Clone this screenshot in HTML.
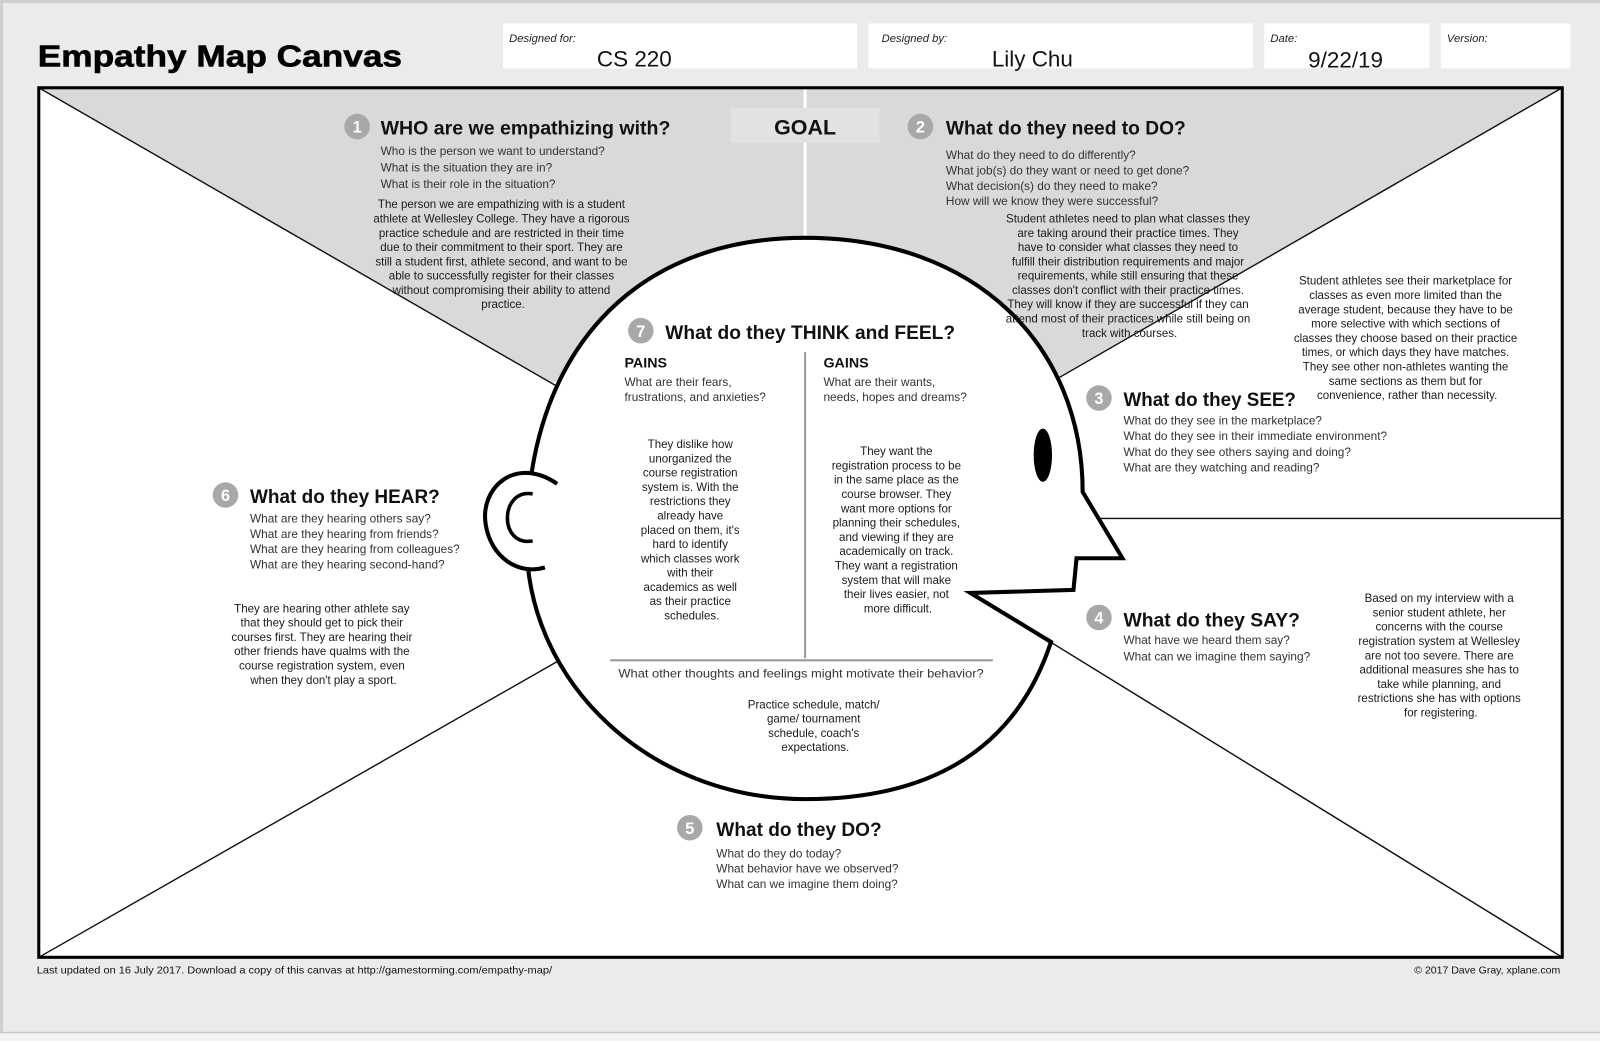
<!DOCTYPE html>
<html><head><meta charset="utf-8"><style>
html,body{margin:0;padding:0;background:#ebebeb;}
svg{display:block;}
text{font-family:"Liberation Sans",sans-serif;}
.q{font-size:11.6px;fill:#333;}
.p{font-size:11.3px;fill:#1a1a1a;text-anchor:middle;}
.h{font-size:19px;font-weight:bold;fill:#111;}
.n{font-size:16px;font-weight:bold;fill:#fff;text-anchor:middle;}
.lbl{font-size:11px;font-style:italic;fill:#222;}
.val{font-size:22px;fill:#111;}
</style></head><body>
<svg width="1600" height="1041" viewBox="0 0 1568 1020" preserveAspectRatio="none" xmlns="http://www.w3.org/2000/svg">
<rect x="0" y="0" width="1568" height="1020" fill="#ebebeb"/>
<rect x="0" y="0" width="1568" height="3" fill="#cfcfcf"/>
<rect x="0" y="0" width="3" height="1020" fill="#cfcfcf"/>
<rect x="0" y="1012" width="1568" height="8" fill="#f3f3f3"/>
<rect x="0" y="1011" width="1568" height="1.5" fill="#c8c8c8"/>

<text x="37" y="65" font-size="30" font-weight="bold" fill="#000" stroke="#000" stroke-width="0.6" textLength="357" lengthAdjust="spacingAndGlyphs">Empathy Map Canvas</text>

<rect x="493" y="23" width="347" height="44" fill="#fff"/>
<rect x="851" y="23" width="377" height="44" fill="#fff"/>
<rect x="1239" y="23" width="162" height="44" fill="#fff"/>
<rect x="1412" y="23" width="127" height="44" fill="#fff"/>
<text class="lbl" x="499" y="41">Designed for:</text>
<text class="val" x="585" y="65">CS 220</text>
<text class="lbl" x="864" y="41">Designed by:</text>
<text class="val" x="972" y="65">Lily Chu</text>
<text class="lbl" x="1245" y="41">Date:</text>
<text class="val" x="1282" y="66">9/22/19</text>
<text class="lbl" x="1418" y="41">Version:</text>

<rect x="38" y="86" width="1493" height="852" fill="#fff"/>
<polygon points="38,86 1531,86 1027,375 789,300 540,375" fill="#d9d9d9"/>
<line x1="789" y1="86" x2="789" y2="300" stroke="#fff" stroke-width="3"/>
<rect x="716" y="106" width="146" height="34" fill="#e2e2e2"/>
<text x="789" y="132" font-size="21" font-weight="bold" fill="#111" text-anchor="middle">GOAL</text>
<g stroke="#111" stroke-width="1.4">
<line x1="38" y1="86" x2="545" y2="378"/>
<line x1="1531" y1="86" x2="1024" y2="378"/>
<line x1="38" y1="938" x2="550" y2="646"/>
<line x1="1531" y1="938" x2="1018" y2="622"/>
<line x1="1060" y1="508" x2="1531" y2="508"/>
</g>
<rect x="38" y="86" width="1493" height="852" fill="none" stroke="#000" stroke-width="3"/>

<!-- head -->
<path d="M789 233 C958 233 1061 340 1061 482 L1100 547 L1055 547 L1052 578 L951 581 L1030 629 C1000 720 929 783 789 783 C638 783 516 670 516 530 C516 346 620 233 789 233 Z" fill="#fff" stroke="#000" stroke-width="4" stroke-linejoin="miter"/>
<ellipse cx="1022" cy="446" rx="9" ry="26" fill="#000"/>
<path d="M546 474 C505 446 470 478 476 514 C481 546 508 564 534 556" fill="#fff" stroke="#000" stroke-width="4"/>
<path d="M522 484 C490 478 488 536 522 530" fill="none" stroke="#000" stroke-width="3.5"/>
<line x1="789" y1="345" x2="789" y2="645" stroke="#9a9a9a" stroke-width="2"/>
<line x1="598" y1="647" x2="973" y2="647" stroke="#9a9a9a" stroke-width="2"/>

<g fill="#a8a8a8">
<circle cx="350" cy="124" r="12.5"/><circle cx="902" cy="124" r="12.5"/>
<circle cx="1077" cy="390" r="12.5"/><circle cx="1077" cy="605" r="12.5"/>
<circle cx="676" cy="811" r="12.5"/><circle cx="221" cy="485" r="12.5"/>
<circle cx="628" cy="324" r="12.5"/>
</g>
<text class="n" x="350" y="130">1</text><text class="n" x="902" y="130">2</text>
<text class="n" x="1077" y="396">3</text><text class="n" x="1077" y="611">4</text>
<text class="n" x="676" y="817">5</text><text class="n" x="221" y="491">6</text>
<text class="n" x="628" y="330">7</text>

<text class="h" x="373" y="132" textLength="284" lengthAdjust="spacingAndGlyphs">WHO are we empathizing with?</text>
<text class="q" x="373" y="152">Who is the person we want to understand?</text>
<text class="q" x="373" y="168">What is the situation they are in?</text>
<text class="q" x="373" y="184">What is their role in the situation?</text>
<text class="p">
<tspan x="493" y="204">The person we are empathizing with is a student</tspan>
<tspan x="493" y="218">athlete at Wellesley College. They have a rigorous</tspan>
<tspan x="493" y="232">practice schedule and are restricted in their time</tspan>
<tspan x="493" y="246">due to their commitment to their sport. They are</tspan>
<tspan x="493" y="260">still a student first, athlete second, and want to be</tspan>
<tspan x="493" y="274">able to successfully register for their classes</tspan>
<tspan x="493" y="288">without compromising their ability to attend</tspan>
<tspan x="493" y="302">practice.</tspan>
</text>

<text class="h" x="927" y="132" textLength="235" lengthAdjust="spacingAndGlyphs">What do they need to DO?</text>
<text class="q" x="927" y="156">What do they need to do differently?</text>
<text class="q" x="927" y="171">What job(s) do they want or need to get done?</text>
<text class="q" x="927" y="186">What decision(s) do they need to make?</text>
<text class="q" x="927" y="201">How will we know they were successful?</text>
<text class="p">
<tspan x="1107" y="218">Student athletes need to plan what classes they</tspan>
<tspan x="1107" y="232">are taking around their practice times. They</tspan>
<tspan x="1107" y="246">have to consider what classes they need to</tspan>
<tspan x="1107" y="260">fulfill their distribution requirements and major</tspan>
<tspan x="1107" y="274">requirements, while still ensuring that these</tspan>
<tspan x="1107" y="288">classes don't conflict with their practice times.</tspan>
<tspan x="1107" y="302">They will know if they are successful if they can</tspan>
<tspan x="1107" y="316">attend most of their practices while still being on</tspan>
<tspan x="1107" y="330">track with courses.</tspan>
</text>

<text class="p">
<tspan x="1379" y="279">Student athletes see their marketplace for</tspan>
<tspan x="1379" y="293">classes as even more limited than the</tspan>
<tspan x="1379" y="307">average student, because they have to be</tspan>
<tspan x="1379" y="321">more selective with which sections of</tspan>
<tspan x="1379" y="335">classes they choose based on their practice</tspan>
<tspan x="1379" y="349">times, or which days they have matches.</tspan>
<tspan x="1379" y="363">They see other non-athletes wanting the</tspan>
<tspan x="1379" y="377">same sections as them but for</tspan>
<tspan x="1379" y="391">convenience, rather than necessity.</tspan>
</text>
<text class="h" x="1101" y="398" textLength="169" lengthAdjust="spacingAndGlyphs">What do they SEE?</text>
<text class="q" x="1101" y="416">What do they see in the marketplace?</text>
<text class="q" x="1101" y="431">What do they see in their immediate environment?</text>
<text class="q" x="1101" y="447">What do they see others saying and doing?</text>
<text class="q" x="1101" y="462">What are they watching and reading?</text>

<text class="h" x="1101" y="614" textLength="173" lengthAdjust="spacingAndGlyphs">What do they SAY?</text>
<text class="q" x="1101" y="631">What have we heard them say?</text>
<text class="q" x="1101" y="647">What can we imagine them saying?</text>
<text class="p">
<tspan x="1412" y="590">Based on my interview with a</tspan>
<tspan x="1412" y="604">senior student athlete, her</tspan>
<tspan x="1412" y="618">concerns with the course</tspan>
<tspan x="1412" y="632">registration system at Wellesley</tspan>
<tspan x="1412" y="646">are not too severe. There are</tspan>
<tspan x="1412" y="660">additional measures she has to</tspan>
<tspan x="1412" y="674">take while planning, and</tspan>
<tspan x="1412" y="688">restrictions she has with options</tspan>
<tspan x="1412" y="702">for registering.</tspan>
</text>

<text class="h" x="702" y="819" textLength="162" lengthAdjust="spacingAndGlyphs">What do they DO?</text>
<text class="q" x="702" y="840">What do they do today?</text>
<text class="q" x="702" y="855">What behavior have we observed?</text>
<text class="q" x="702" y="870">What can we imagine them doing?</text>

<text class="h" x="245" y="493" textLength="186" lengthAdjust="spacingAndGlyphs">What do they HEAR?</text>
<text class="q" x="245" y="512">What are they hearing others say?</text>
<text class="q" x="245" y="527">What are they hearing from friends?</text>
<text class="q" x="245" y="542">What are they hearing from colleagues?</text>
<text class="q" x="245" y="557">What are they hearing second-hand?</text>
<text class="p">
<tspan x="317" y="600">They are hearing other athlete say</tspan>
<tspan x="317" y="614">that they should get to pick their</tspan>
<tspan x="317" y="628">courses first. They are hearing their</tspan>
<tspan x="317" y="642">other friends have qualms with the</tspan>
<tspan x="317" y="656">course registration system, even</tspan>
<tspan x="317" y="670">when they don't play a sport.</tspan>
</text>

<text class="h" x="652" y="332" textLength="284" lengthAdjust="spacingAndGlyphs">What do they THINK and FEEL?</text>
<text x="612" y="360" font-size="14" font-weight="bold" fill="#111">PAINS</text>
<text x="807" y="360" font-size="14" font-weight="bold" fill="#111">GAINS</text>
<text class="q" x="612" y="378">What are their fears,</text>
<text class="q" x="612" y="393">frustrations, and anxieties?</text>
<text class="q" x="807" y="378">What are their wants,</text>
<text class="q" x="807" y="393">needs, hopes and dreams?</text>
<text class="p">
<tspan x="678" y="439">They dislike how</tspan>
<tspan x="678" y="453">unorganized the</tspan>
<tspan x="678" y="467">course registration</tspan>
<tspan x="678" y="481">system is. With the</tspan>
<tspan x="678" y="495">restrictions they</tspan>
<tspan x="678" y="509">already have</tspan>
<tspan x="678" y="523">placed on them, it's</tspan>
<tspan x="678" y="537">hard to identify</tspan>
<tspan x="678" y="551">which classes work</tspan>
<tspan x="678" y="565">with their</tspan>
<tspan x="678" y="579">academics as well</tspan>
<tspan x="678" y="593">as their practice</tspan>
<tspan x="678" y="607">schedules.</tspan>
</text>
<text class="p">
<tspan x="880" y="446">They want the</tspan>
<tspan x="880" y="460">registration process to be</tspan>
<tspan x="880" y="474">in the same place as the</tspan>
<tspan x="880" y="488">course browser. They</tspan>
<tspan x="880" y="502">want more options for</tspan>
<tspan x="880" y="516">planning their schedules,</tspan>
<tspan x="880" y="530">and viewing if they are</tspan>
<tspan x="880" y="544">academically on track.</tspan>
<tspan x="880" y="558">They want a registration</tspan>
<tspan x="880" y="572">system that will make</tspan>
<tspan x="880" y="586">their lives easier, not</tspan>
<tspan x="880" y="600">more difficult.</tspan>
</text>
<text class="q" x="785" y="664" text-anchor="middle" textLength="358" lengthAdjust="spacingAndGlyphs">What other thoughts and feelings might motivate their behavior?</text>
<text class="p">
<tspan x="799" y="694">Practice schedule, match/</tspan>
<tspan x="799" y="708">game/ tournament</tspan>
<tspan x="799" y="722">schedule, coach's</tspan>
<tspan x="799" y="736">expectations.</tspan>
</text>

<text x="36" y="954" font-size="10" fill="#111" textLength="505" lengthAdjust="spacingAndGlyphs">Last updated on 16 July 2017. Download a copy of this canvas at http://gamestorming.com/empathy-map/</text>
<text x="1529" y="954" font-size="10" fill="#111" text-anchor="end" textLength="143" lengthAdjust="spacingAndGlyphs">© 2017 Dave Gray, xplane.com</text>
</svg>
</body></html>
